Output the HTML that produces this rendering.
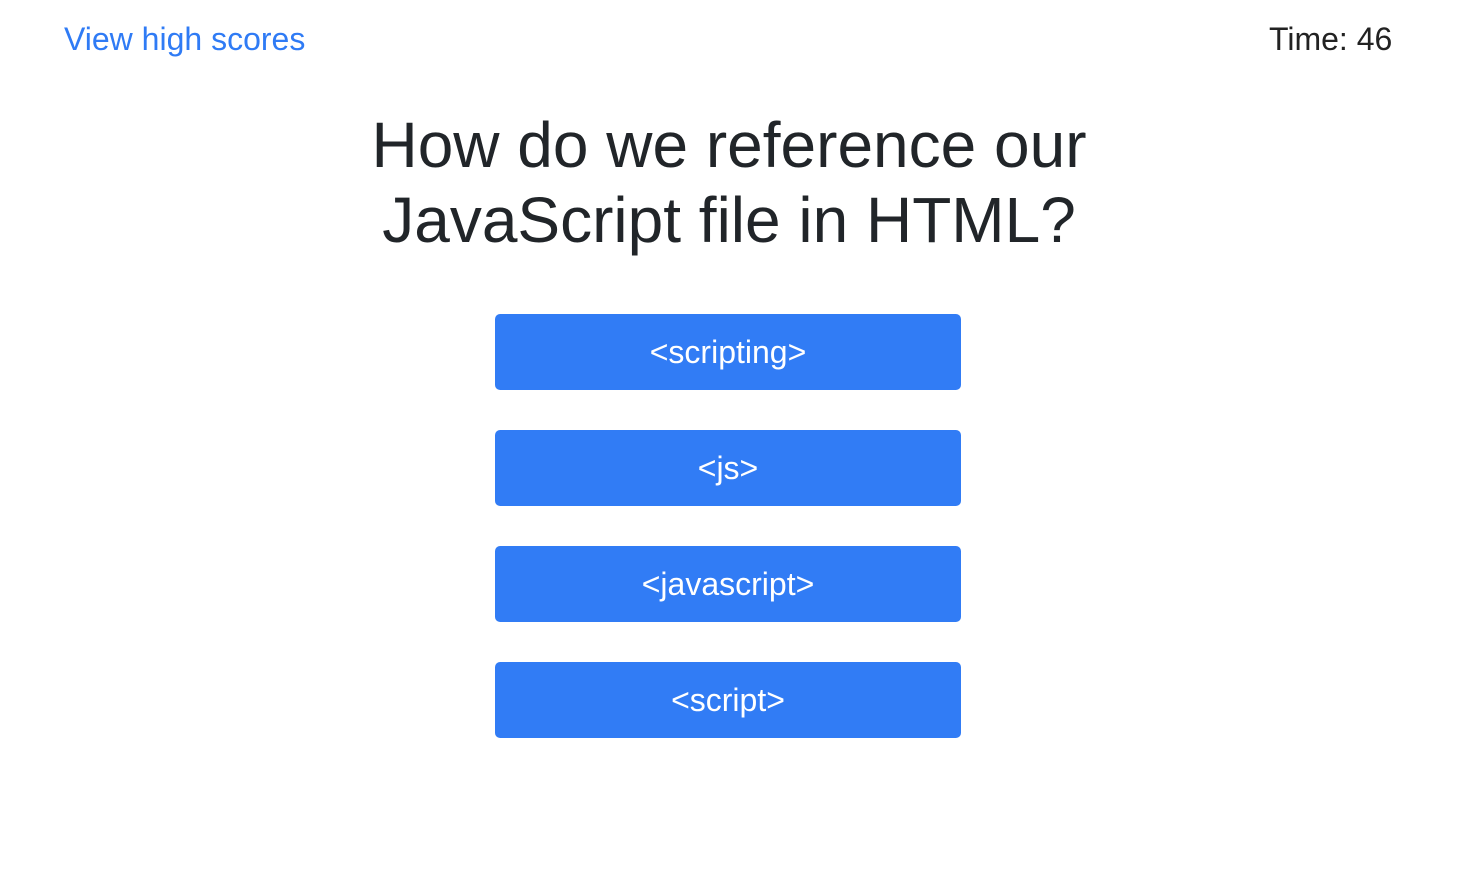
<!DOCTYPE html>
<html><head><meta charset="utf-8"><style>
body{margin:0;width:1464px;height:872px;background:#fff;font-family:"Liberation Sans",Arial,sans-serif;position:relative;overflow:hidden}
.hs{position:absolute;left:64px;top:21px;font-size:32px;color:#2f7bf5}
.time{position:absolute;left:1269px;top:21px;font-size:32px;color:#222}
h1{position:absolute;left:0;width:1458px;top:108px;margin:0;text-align:center;font-weight:400;font-size:64px;line-height:75px;color:#212529}
.b{position:absolute;left:495px;width:466px;height:76px;background:#317cf5;border-radius:5px;color:#fff;font-size:32px;text-align:center;line-height:77px}
</style></head><body>
<div class="hs">View high scores</div>
<div class="time">Time: 46</div>
<h1>How do we reference our<br>JavaScript file in HTML?</h1>
<div class="b" style="top:314px">&lt;scripting&gt;</div>
<div class="b" style="top:430px">&lt;js&gt;</div>
<div class="b" style="top:546px">&lt;javascript&gt;</div>
<div class="b" style="top:662px">&lt;script&gt;</div>
</body></html>
